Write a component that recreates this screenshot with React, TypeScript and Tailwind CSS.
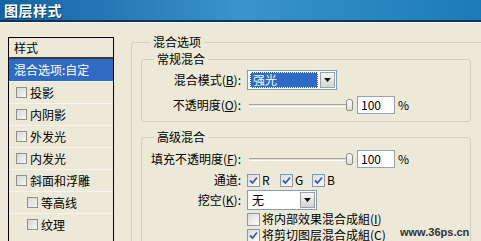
import type { ReactNode } from 'react';

const FONT = '"Noto Sans CJK SC", "Noto Sans", sans-serif';

function ListBox() {
  return <span className="inline-block w-[11px] h-[11px] border border-[#8e8f8f] bg-gradient-to-br from-[#d8d7d0] to-[#f8f8f4] shrink-0" />;
}

function CheckBox({ checked }: { checked: boolean }) {
  return (
    <span className="relative inline-flex items-center justify-center w-[13px] h-[13px] border border-[#8a98ad] bg-gradient-to-br from-[#dcdcd6] to-[#fbfbf9] shrink-0">
      {checked && (
        <svg width="9" height="9" viewBox="0 0 9 9" className="block">
          <path d="M1 4.5 L3.5 7 L8 1.5" fill="none" stroke="#3f5bb5" strokeWidth="1.8" />
        </svg>
      )}
    </span>
  );
}

function DropButton() {
  return (
    <span className="flex items-center justify-center w-[15px] h-[16px] border border-[#9aa0aa] bg-gradient-to-b from-[#f4f4f4] to-[#d6d6d0]">
      <svg width="7" height="4" viewBox="0 0 7 4">
        <path d="M0 0 H7 L3.5 4 Z" fill="#111" />
      </svg>
    </span>
  );
}

function Slider() {
  return (
    <div className="relative w-[106px] h-[18px] flex items-center">
      <div className="ml-[2px] w-[98px] h-[3px] border-t border-[#a7a69a] border-b border-b-white bg-[#e3e1d6]" />
      <span className="absolute left-[99px] top-[3px] w-[7px] h-[12px] rounded-t-[3px] rounded-b-[2px] border border-[#8d8d85] bg-gradient-to-b from-white to-[#dedcd3]" />
    </div>
  );
}

function PercentInput() {
  return (
    <div className="flex items-center">
      <div className="ml-[4px] w-[38px] h-[18px] border border-[#9aa3ad] bg-white pl-[3px] leading-[16px]">100</div>
      <span className="ml-[3px]">%</span>
    </div>
  );
}

function Row({ label, children, className = '' }: { label?: ReactNode; children: ReactNode; className?: string }) {
  return (
    <div className={`flex items-center ${className}`}>
      <div className="w-[99px] text-right whitespace-nowrap">{label}</div>
      <div className="ml-[6px] flex items-center">{children}</div>
    </div>
  );
}

const listItems: { label: string; indent?: boolean }[] = [
  { label: '投影' },
  { label: '内阴影' },
  { label: '外发光' },
  { label: '内发光' },
  { label: '斜面和浮雕' },
  { label: '等高线', indent: true },
  { label: '纹理', indent: true },
];

export default function App() {
  return (
    <div
      className="relative w-[481px] h-[241px] overflow-hidden bg-[#ece9d8] text-[12px] leading-[14px] text-black"
      style={{ fontFamily: FONT }}
    >
      {/* Title bar */}
      <div className="h-[20px] flex items-center pl-[4px] bg-gradient-to-r from-[#1363a4] via-[#3a93ca] to-[#1a7bb6]">
        <span className="text-white text-[14px] font-bold tracking-[0.5px] [text-shadow:1px_1px_0_#0b3d66]">图层样式</span>
      </div>
      <div className="h-[2px] bg-[#0c3556]" />
      <div className="h-[1px] bg-[#f7f6f0]" />

      <div className="flex">
        {/* Style list */}
        <div className="ml-[8px] mt-[14px] w-[106px] h-[220px] border border-black border-b-0 shrink-0">
          <div className="h-[21px] flex items-center pl-[5px] border-b-2 border-[#3a3a3a]">样式</div>
          <div className="h-[22px] flex items-center pl-[5px] bg-[#316ac5] text-white whitespace-nowrap">混合选项:自定</div>
          {listItems.map((it) => (
            <div
              key={it.label}
              className={`h-[22px] flex items-center gap-[3px] border-t border-[#f6f5ef] ${it.indent ? 'pl-[18px]' : 'pl-[7px]'}`}
            >
              <ListBox />
              <span>{it.label}</span>
            </div>
          ))}
        </div>

        {/* Options */}
        <fieldset className="ml-[17px] mt-[12px] w-[380px] h-[240px] border border-[#d0d0bf] rounded-[3px] pl-[9px] shrink-0">
          <legend className="ml-[9px] px-[3px] leading-[14px]">混合选项</legend>

          <fieldset className="mt-[3px] w-[330px] h-[70px] border border-[#d0d0bf] rounded-[3px]">
            <legend className="ml-[12px] px-[3px] leading-[14px]">常规混合</legend>
            <div className="pt-[4px] flex flex-col gap-[6px]">
              <Row label={<>混合模式(<u>B</u>):</>}>
                <div className="w-[90px] h-[20px] border border-[#7f9db9] bg-white flex items-center pl-[2px] pr-[1px]">
                  <div className="flex-1 h-[16px] bg-[#316ac5] outline-1 outline-dotted outline-[#ffe] -outline-offset-1 text-white pl-[3px] leading-[16px]">强光</div>
                  <div className="ml-[2px]">
                    <DropButton />
                  </div>
                </div>
              </Row>
              <Row label={<>不透明度(<u>O</u>):</>}>
                <Slider />
                <PercentInput />
              </Row>
            </div>
          </fieldset>

          <fieldset className="mt-[8px] w-[330px] h-[140px] border border-[#d0d0bf] rounded-[3px]">
            <legend className="ml-[12px] px-[3px] leading-[14px]">高级混合</legend>
            <div className="pt-[6px] flex flex-col">
              <Row label={<>填充不透明度(<u>F</u>):</>}>
                <Slider />
                <PercentInput />
              </Row>
              <Row label="通道:" className="mt-[4px] h-[16px]">
                <div className="flex items-center w-[33px] gap-[2px]">
                  <CheckBox checked />
                  <span>R</span>
                </div>
                <div className="flex items-center w-[32px] gap-[2px]">
                  <CheckBox checked />
                  <span>G</span>
                </div>
                <div className="flex items-center gap-[2px]">
                  <CheckBox checked />
                  <span>B</span>
                </div>
              </Row>
              <Row label={<>挖空(<u>K</u>):</>} className="mt-[2px]">
                <div className="w-[70px] h-[20px] border border-[#7f9db9] bg-white flex items-center pl-[4px] pr-[1px]">
                  <span className="flex-1">无</span>
                  <DropButton />
                </div>
              </Row>
              <Row className="h-[16px] mt-[1px]">
                <div className="flex items-center gap-[2px] whitespace-nowrap">
                  <CheckBox checked={false} />
                  <span>将内部效果混合成組(<u>I</u>)</span>
                </div>
              </Row>
              <Row className="h-[16px]">
                <div className="flex items-center gap-[2px] whitespace-nowrap">
                  <CheckBox checked />
                  <span>将剪切图层混合成組(<u>C</u>)</span>
                </div>
              </Row>
            </div>
          </fieldset>
        </fieldset>
      </div>

      <span
        className="absolute left-[400px] top-[226px] text-[11px] leading-[12px] font-bold text-[#333]"
        style={{ fontFamily: '"Liberation Sans", Arial, sans-serif' }}
      >
        www.36ps.cn
      </span>
    </div>
  );
}
